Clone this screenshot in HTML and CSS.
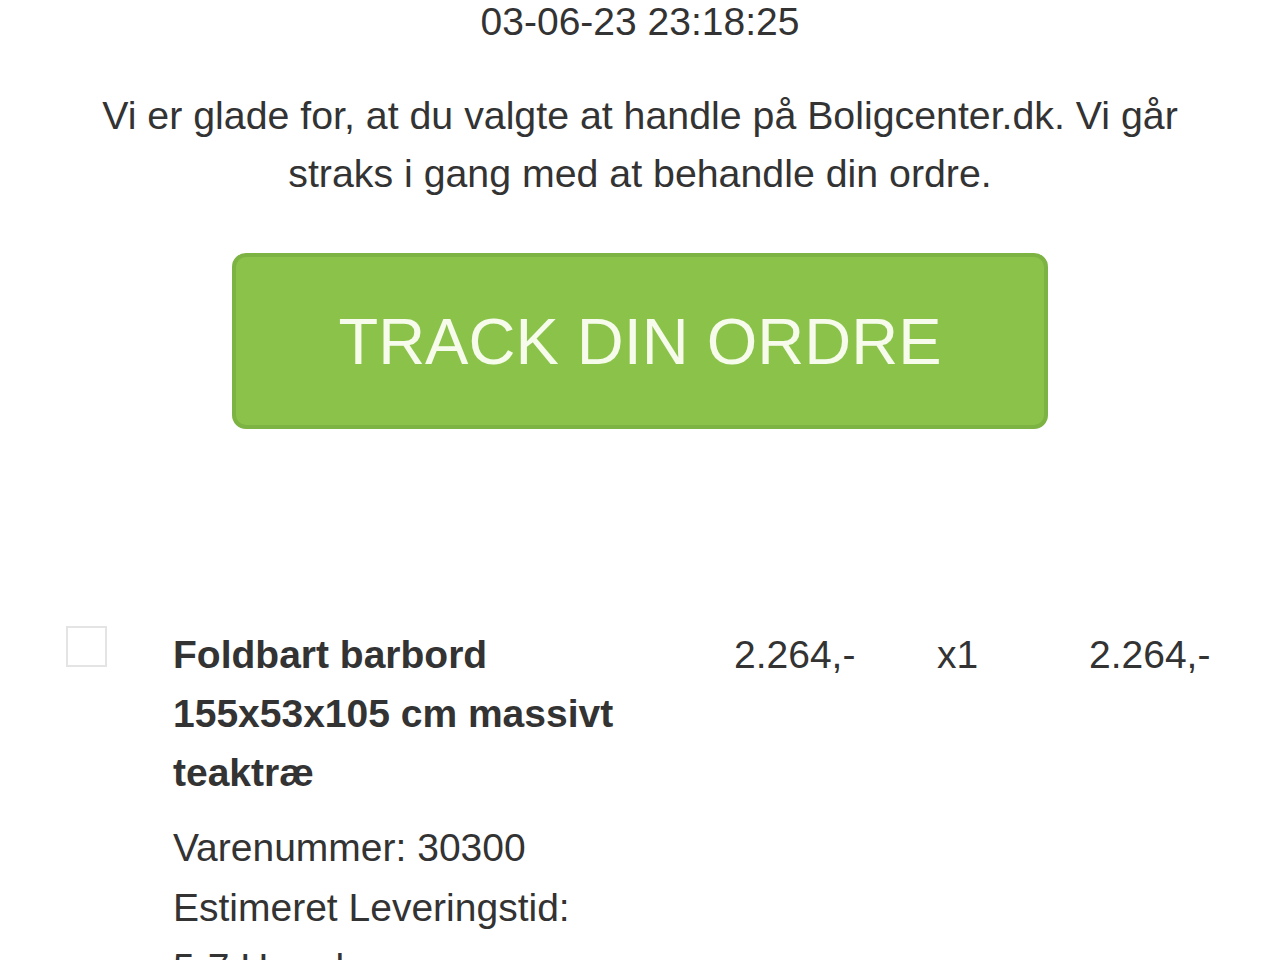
FILE: index.html
```html
<!DOCTYPE html>
<html lang="da">
<head>
    <meta charset="UTF-8">
    <meta name="viewport" content="width=device-width, initial-scale=1.0">
    <title>Ordrebekræftelse</title>
    <link rel="stylesheet" href="styles.css">
</head>
<body>
    <div class="mail">
        <div class="intro">
            <p class="date">03-06-23 23:18:25</p>
            <p class="thanks">Vi er glade for, at du valgte at handle på Boligcenter.dk. Vi går straks i gang med at behandle din ordre.</p>
            <a class="track-btn" href="#">TRACK DIN ORDRE</a>
        </div>

        <div class="order-line">
            <div class="thumb"></div>
            <div class="product">
                <div class="product-name">Foldbart barbord 155x53x105 cm massivt teaktræ</div>
                <div class="product-info">
                    Varenummer: 30300<br>
                    Estimeret Leveringstid:<br>
                    5-7 Hverdage
                </div>
            </div>
            <div class="price">2.264,-</div>
            <div class="qty">x1</div>
            <div class="total">2.264,-</div>
        </div>
    </div>
</body>
</html>
```

FILE: styles.css
```css
body {
    margin: 0;
    font-family: "Liberation Sans", Arial, sans-serif;
    color: #333;
    background: #fff;
}
.mail {
    width: 1280px;
}
.intro {
    display: flex;
    flex-direction: column;
    align-items: center;
    padding: 0 60px;
    text-align: center;
}
.date {
    margin: 0;
    font-size: 39px;
    line-height: 44px;
}
.thanks {
    margin: 42px 0 0;
    font-size: 39.3px;
    line-height: 58px;
}
.track-btn {
    display: flex;
    align-items: center;
    justify-content: center;
    box-sizing: border-box;
    width: 816px;
    height: 176px;
    margin-top: 51px;
    background-color: #8bc34a;
    border: 4px solid #7cb342;
    border-radius: 14px;
    color: #f6fbec;
    font-size: 65px;
    text-decoration: none;
}
.order-line {
    display: grid;
    grid-template-columns: 107px 561px 203px 152px auto;
    align-items: start;
    margin-top: 196px;
    padding-left: 66px;
    font-size: 39px;
    line-height: 59px;
}
.thumb {
    box-sizing: border-box;
    width: 41px;
    height: 41px;
    margin-top: 1px;
    border: 2px solid #e4e4e4;
}
.product-name {
    width: 540px;
    font-weight: bold;
}
.product-info {
    margin-top: 16px;
    line-height: 60px;
}
```
